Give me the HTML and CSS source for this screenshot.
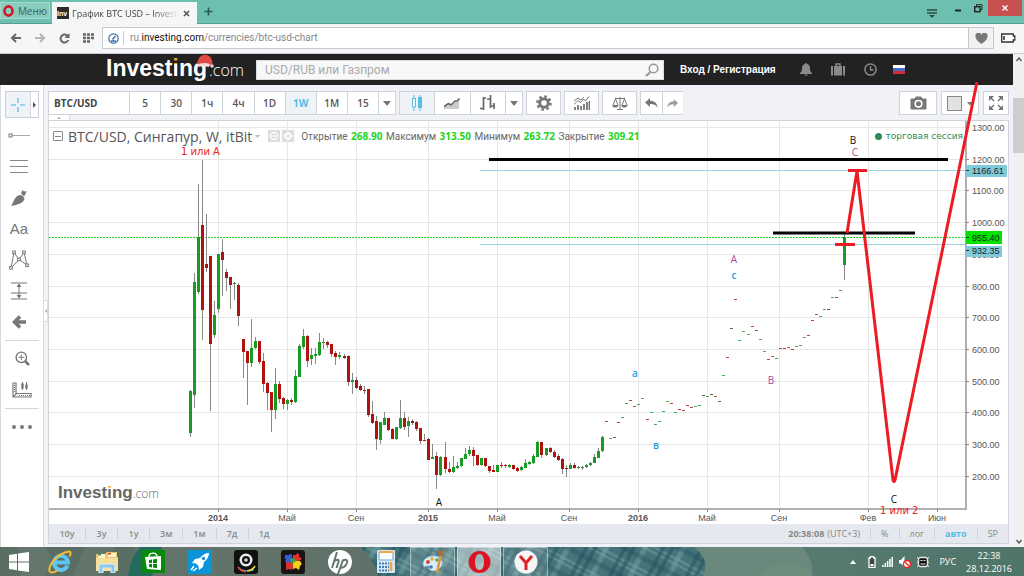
FILE: index.html
```html
<!DOCTYPE html>
<html lang="ru">

<head>
    <meta charset="UTF-8">
    <meta name="viewport" content="width=device-width, initial-scale=1.0">
    <title>График BTC USD – Investing.com</title>
    <link rel="stylesheet" href="styles.css">
</head>

<body>

    <!-- Browser tabs -->
    <div class="tabbar">
        <button class="opera-menu">
            <svg width="11" height="12" viewBox="0 0 11 12"><ellipse cx="5.5" cy="6" rx="4" ry="4.6" fill="none" stroke="#d8131f" stroke-width="2.6"/></svg>
            Меню
        </button>
        <div class="tab">
            <svg width="12" height="12" viewBox="0 0 12 12"><rect width="12" height="12" fill="#2b2b2b"/><text x="0" y="9" font-family="Liberation Sans" font-weight="bold" font-size="7" fill="#fff">Inv</text></svg>
            <span class="tab-title">График BTC USD – Investi</span>
            <button class="tab-close" aria-label="Закрыть"><svg width="7" height="7" viewBox="0 0 7 7"><path d="M1 1l5 5M6 1L1 6" stroke="#555" stroke-width="1.6"/></svg></button>
        </div>
        <button class="tab-new" aria-label="Новая вкладка"><svg width="9" height="9" viewBox="0 0 9 9"><path d="M4.500 0.500v8M0.500 4.500h8" stroke="#2d5a52" stroke-width="1.6"/></svg></button>
        <div class="window-buttons">
            <button class="win-list" aria-label="Вкладки"><svg width="10" height="9" viewBox="0 0 10 9"><path d="M0 1h10M0 4h10" stroke="#2d4f49" stroke-width="1.300"/><path d="M2 6h6L5 9z" fill="#2d4f49"/></svg></button>
            <button class="win-min" aria-label="Свернуть"><svg width="7" height="3" viewBox="0 0 7 3"><path d="M0 1.500h6" stroke="#222" stroke-width="2"/></svg></button>
            <button class="win-max" aria-label="Развернуть"><svg width="9" height="9" viewBox="0 0 9 9"><path d="M2.500 2V.7H8v5H6.500" fill="none" stroke="#222"/><rect x=".7" y="2.700" width="5.300" height="5" fill="none" stroke="#222" stroke-width="1.400"/></svg></button>
            <button class="win-close" aria-label="Закрыть окно"><svg width="6" height="6" viewBox="0 0 6 6"><path d="M.5.5l5 5M5.500.5l-5 5" stroke="#fff" stroke-width="1.400"/></svg></button>
        </div>
    </div>

    <!-- Address bar -->
    <div class="addressbar">
        <button aria-label="Назад"><svg width="12" height="10" viewBox="0 0 12 10"><path d="M6 1L2 5l4 4M2 5h9" fill="none" stroke="#666" stroke-width="2"/></svg></button>
        <button aria-label="Вперед"><svg width="12" height="10" viewBox="0 0 12 10"><path d="M6 1l4 4-4 4M10 5H1" fill="none" stroke="#b5b5b5" stroke-width="2"/></svg></button>
        <button aria-label="Обновить"><svg width="11" height="11" viewBox="0 0 11 11"><path d="M9 3.500A4 4 0 1 0 9.300 7" fill="none" stroke="#666" stroke-width="2"/><path d="M10.500 0v5H5.500z" fill="#666"/></svg></button>
        <button aria-label="Экспресс-панель"><svg width="11" height="10" viewBox="0 0 11 10"><path d="M0 1.500h11M0 5h11M0 8.500h7" stroke="#666" stroke-width="2.600" stroke-dasharray="3 1"/></svg></button>
        <div class="url-box">
            <svg width="11" height="11" viewBox="0 0 11 11"><circle cx="5.500" cy="5.500" r="4.700" fill="none" stroke="#3a6ea5" stroke-width="1.200"/><path d="M3 8h5M4.500 6.500l3-3.500" stroke="#3a6ea5" stroke-width="1.400"/></svg>
            <a class="url" href="#">ru.<b>investing.com</b>/currencies/btc-usd-chart</a>
            <button class="heart" aria-label="В закладки"><svg width="13" height="11" viewBox="0 0 13 11"><path d="M6.500 11C2 7.500.5 5.700.5 3.500A3 3 0 0 1 6.500 2a3 3 0 0 1 6 1.500C12.500 5.700 11 7.500 6.500 11z" fill="#777"/></svg></button>
        </div>
        <svg class="battery" width="15" height="10" viewBox="0 0 15 10"><path d="M.7 1h11.600v2h1.500v4h-1.500v2H.7z" fill="#fff" stroke="#333" stroke-width="1.300"/><path d="M3 3v4" stroke="#222" stroke-width="1.500"/></svg>
    </div>

    <div class="viewport">
        <div class="page">
            <header class="site-header">
                <a class="logo" href="#">
                    <span class="logo-name">Invest<span class="logo-i">i</span>ng</span><span class="logo-com">.com</span>
                    <svg class="hat" width="18" height="14" viewBox="0 0 18 14"><path d="M1 10C2 2 8-1 13 2c3 2 4 6 3 10z" fill="#e14a45"/><path d="M0 11c4-2 9-3 14-1l-1 3c-4-1-8-1-12 0z" fill="#f6dada"/><circle cx="16" cy="12" r="1.800" fill="#f4c9c9"/></svg>
                </a>
                <form class="search">
                    <input type="text" placeholder="USD/RUB или Газпром" aria-label="Поиск">
                    <button type="button" aria-label="Найти"><svg width="14" height="14" viewBox="0 0 14 14"><circle cx="8.500" cy="5.500" r="4.300" fill="none" stroke="#999" stroke-width="1.600"/><path d="M5.500 9L1 13" stroke="#999" stroke-width="2.200"/></svg></button>
                </form>
                <a class="login" href="#">Вход / Регистрация</a>
                <button aria-label="Уведомления"><svg width="12" height="13" viewBox="0 0 12 13"><path d="M6 0a1 1 0 0 1 1 1c2 .6 3 2 3 4.500 0 2.500.6 3.500 2 4.500v1H0v-1c1.400-1 2-2 2-4.500C2 3 3 1.600 5 1a1 1 0 0 1 1-1zM4.500 11.500h3a1.500 1.200 0 0 1-3 0z" fill="#8a8a8a"/></svg></button>
                <button aria-label="Портфель"><svg width="14" height="13" viewBox="0 0 14 13"><path d="M5 3V1h4v2" fill="none" stroke="#8a8a8a" stroke-width="1.400"/><path d="M0 3h2v9.500H0zM3 3h8v9.500H3zM12 3h2v9.500h-2z" fill="#8a8a8a"/></svg></button>
                <button aria-label="История"><svg width="13" height="13" viewBox="0 0 13 13"><circle cx="6.500" cy="6.500" r="5.600" fill="none" stroke="#8a8a8a" stroke-width="1.500"/><path d="M6.500 3v4h3" fill="none" stroke="#8a8a8a" stroke-width="1.300"/></svg></button>
                <button aria-label="Русский"><svg width="12" height="9" viewBox="0 0 12 9"><path d="M0 0h12v3H0z" fill="#fff"/><path d="M0 3h12v3H0z" fill="#3f6fc4"/><path d="M0 6h12v3H0z" fill="#d92b35"/></svg></button>
            </header>

            <div class="workspace">
                <!-- Drawing tools -->
                <div class="tools">
                    <div class="tool-split">
                        <button class="cross" aria-label="Перекрестие"><svg width="14" height="14" viewBox="0 0 14 14"><path d="M7 0v5M7 9v5M0 7h5M9 7h5" stroke="#7cc9e8" stroke-width="1.600"/></svg></button>
                        <button class="more" aria-label="Еще"><svg width="3" height="6" viewBox="0 0 3 6"><path d="M0 0l3 3-3 3z" fill="#555"/></svg></button>
                    </div>
                    <button aria-label="Линия"><svg width="22" height="5" viewBox="0 0 22 5"><path d="M3 2.500h19" stroke="#aaa"/><rect x="1" y="1" width="3" height="3" fill="#fff" stroke="#777"/></svg></button>
                    <button aria-label="Каналы"><svg width="18" height="14" viewBox="0 0 18 14"><path d="M0 .5h18M0 6.500h18M0 12.500h18" stroke="#888"/></svg></button>
                    <button aria-label="Кисть"><svg width="18" height="18" viewBox="0 0 18 18"><path d="M1 17C4 13 4 9 8 6.500c2-1 3-.5 4 0l2.500 2.500c0 5-7 7-13.500 8z" fill="#777"/><path d="M11 4.500L12.500 1l1.500 1.500 2.500-.5-1 3-1.500 2.500z" fill="#777"/></svg></button>
                    <button class="tool-text">Aa</button>
                    <button aria-label="Фигуры"><svg width="20" height="20" viewBox="0 0 20 20"><path d="M2 18L5 2.500l5 7 5-7L18 15l-8-5.500z" fill="none" stroke="#777"/><g fill="#fff" stroke="#777"><rect x=".7" y="16.500" width="2.600" height="2.600"/><rect x="3.700" y="1" width="2.600" height="2.600"/><rect x="13.700" y="1" width="2.600" height="2.600"/><rect x="16.700" y="14" width="2.600" height="2.600"/><rect x="8.700" y="8.200" width="2.600" height="2.600"/></g></svg></button>
                    <button aria-label="Измерение"><svg width="16" height="18" viewBox="0 0 16 18"><path d="M0 1h16M0 11h16M0 17h16M8 2v14" stroke="#777"/><path d="M5.500 5L8 1.500 10.500 5zM5.500 13L8 16.500 10.500 13z" fill="#777"/></svg></button>
                    <button aria-label="Стрелка"><svg width="15" height="14" viewBox="0 0 15 14"><path d="M8 1.500L2.500 7 8 12.500M3 7h11" fill="none" stroke="#777" stroke-width="3.600"/></svg></button>
                    <hr>
                    <button class="wide" aria-label="Увеличить"><svg width="15" height="15" viewBox="0 0 15 15"><circle cx="6.300" cy="6.300" r="5.200" fill="none" stroke="#777" stroke-width="1.400"/><path d="M3.500 6.300h5.600M6.300 3.500v5.600" stroke="#777"/><path d="M10 10l4 4" stroke="#777" stroke-width="2.600"/></svg></button>
                    <button class="wide" aria-label="Линейка"><svg width="20" height="16" viewBox="0 0 20 16"><path d="M1 1h3v10.500h15v3.500H1zM1 15l4-4" fill="none" stroke="#777" stroke-width="1.200"/><path d="M7 13.500h11M2.500 3v8" stroke="#777" stroke-dasharray="1 1"/><path d="M10.500 0v8M14.500 0v8" stroke="#777"/><path d="M10.500 1.500v5M14.500 2.500v4" stroke="#777" stroke-width="2.400"/></svg></button>
                    <hr>
                    <button class="wide" aria-label="Другое"><svg width="20" height="4" viewBox="0 0 20 4"><g fill="#777"><circle cx="2" cy="2" r="2"/><circle cx="10" cy="2" r="2"/><circle cx="18" cy="2" r="2"/></g></svg></button>
                    <button class="handle" aria-label="Скрыть панель"><svg width="2" height="4" viewBox="0 0 2 4"><path d="M2 0v4L0 2z" fill="#aaa"/></svg></button>
                </div>

                <div class="terminal">
                    <!-- Chart toolbar -->
                    <div class="toolbar">
                        <div class="group intervals">
                            <input class="symbol" type="text" value="BTC/USD" aria-label="Символ">
                            <button>5</button>
                            <button>30</button>
                            <button>1ч</button>
                            <button>4ч</button>
                            <button>1D</button>
                            <button class="active">1W</button>
                            <button>1M</button>
                            <button>15</button>
                            <button class="drop" aria-label="Интервалы"><svg width="8" height="5" viewBox="0 0 8 5"><path d="M0 0h8L4 5z" fill="#777"/></svg></button>
                        </div>
                        <div class="group styles">
                            <button class="active" aria-label="Свечи"><svg width="12" height="16" viewBox="0 0 12 16"><path d="M3 0v3M3 12v4M9 0v16" stroke="#56bde6"/><rect x="1.500" y="3.500" width="3" height="8.500" fill="#fff" stroke="#56bde6"/><rect x="7" y="2" width="4" height="11" fill="#56bde6"/></svg></button>
                            <button aria-label="Область"><svg width="16" height="11" viewBox="0 0 16 11"><path d="M0 9l4-3 3 2 4-4 4-2v9H0z" fill="#ccc"/><path d="M0 8.500l4.500-3L7 7l4-4h2l2.500-2.500" fill="none" stroke="#666" stroke-width="1.600"/></svg></button>
                            <button aria-label="Бары"><svg width="16" height="16" viewBox="0 0 16 16"><path d="M3.500 2v13M0 13.500h4M3 3h3M10.500 0v13M7 4h3M10 11h5M14 8v6" fill="none" stroke="#666" stroke-width="1.700"/></svg></button>
                            <button class="drop" aria-label="Типы графика"><svg width="8" height="5" viewBox="0 0 8 5"><path d="M0 0h8L4 5z" fill="#777"/></svg></button>
                        </div>
                        <div class="group single"><button aria-label="Настройки"><svg width="16" height="16" viewBox="0 0 16 16"><circle cx="8" cy="8" r="4.300" fill="none" stroke="#777" stroke-width="3"/><circle cx="8" cy="8" r="6.600" fill="none" stroke="#777" stroke-width="2.400" stroke-dasharray="2.600 2.584"/></svg></button></div>
                        <div class="group single"><button aria-label="Индикаторы"><svg width="16" height="14" viewBox="0 0 16 14"><path d="M1 14v-3M4 14V9M7 14v-4M10 14V8M13 14V6M15.500 14V5" stroke="#777" stroke-width="1.800"/><path d="M0 8.500l4-4 2.500 2 3-3.500 2 2L15 .5M0 5l4-3 3 2 3-3" fill="none" stroke="#777"/></svg></button></div>
                        <div class="group single"><button aria-label="Сравнить"><svg width="16" height="13" viewBox="0 0 16 13"><path d="M8 0v12M5 12.500h6M3 1.500h10M3.500 2L.8 8.500h5.400zM12.500 2L9.800 8.500h5.400z" fill="none" stroke="#777"/><path d="M.5 8.500h5.500a2.700 2 0 0 1-5.500 0zM9.500 8.500H15a2.700 2 0 0 1-5.500 0z" fill="#777"/></svg></button></div>
                        <div class="group undo">
                            <button aria-label="Отменить"><svg width="13" height="10" viewBox="0 0 13 10"><path d="M5 0v2.700c4.500 0 7 2 7.500 7C11 7 9 6 5 6v3L0 4.500z" fill="#777"/></svg></button>
                            <button aria-label="Повторить"><svg width="11" height="9" viewBox="0 0 13 10"><path d="M8 0v2.700C3.500 2.700 1 4.700.5 9.700 2 7 4 6 8 6v3l5-4.500z" fill="#999"/></svg></button>
                        </div>
                        <div class="right-tools">
                            <div class="group layout"><button aria-label="Снимок"><svg width="17" height="14" viewBox="0 0 17 14"><path d="M1.500 2.500h3L6 .5h5l1.500 2h3a1 1 0 0 1 1 1v9a1 1 0 0 1-1 1h-14a1 1 0 0 1-1-1v-9a1 1 0 0 1 1-1z" fill="#777"/><circle cx="8.500" cy="7.800" r="3.300" fill="#777" stroke="#fff" stroke-width="1.600"/></svg></button></div>
                            <div class="group layout"><button aria-label="Макет"><svg width="26" height="15" viewBox="0 0 26 15"><rect x=".5" y=".5" width="14" height="14" fill="#e2e2e2" stroke="#888"/><path d="M20 6h6l-3 3.500z" fill="#777"/></svg></button></div>
                            <div class="group full"><button aria-label="Во весь экран"><svg width="16" height="16" viewBox="0 0 16 16"><path d="M1 6V1h5zM10 1h5v5zM1 10v5h5zM15 10v5h-5z" fill="#777"/><path d="M2 2l4 4M14 2l-4 4M2 14l4-4M14 14l-4-4" stroke="#777" stroke-width="1.500"/></svg></button></div>
                        </div>
                    </div>
                    <button class="collapse" aria-label="Свернуть панель"><svg width="4" height="2" viewBox="0 0 4 2"><path d="M0 2h4L2 0z" fill="#aaa"/></svg></button>

                    <div class="chart">
                        <svg class="plot" viewBox="49 121 959 403">
                            <g id="grid"></g>
                            <path class="price-line" d="M49 237.500H966"/>
                            <path class="level" d="M480 170.500H966M480 244.500H966"/>
                            <g id="candles"></g>
                            <path class="axis" d="M49 509H967M966 121V510"/>
                            <g id="axis-labels"></g>
                            <g class="tags">
                                <rect x="966" y="165" width="41" height="12" fill="#7fcbda"/>
                                <rect x="966" y="246" width="36" height="11" fill="#7fcbda"/>
                                <rect x="966" y="231" width="36" height="13" fill="#00e400"/>
                                <path d="M966 170.500h3M966 237.500h3M966 250.500h3" stroke="#333"/>
                                <text x="972" y="174">1166.61</text>
                                <text x="972" y="241">955.40</text>
                                <text x="972" y="254">932.35</text>
                            </g>
                            <path class="thick" d="M489 159.500H948M773 233H915"/>
                            <path class="wave" d="M848 170.500H867M835 244.500H855M847 233L857 171L893 480Q894 483 895 480L977 82"/>
                            <g class="marks">
                                <text class="verdana red" x="181" y="155">1 или A</text>
                                <text class="verdana red" x="880" y="514">1 или 2</text>
                                <text x="439" y="506">A</text>
                                <text x="853" y="144">B</text>
                                <text x="894" y="503">C</text>
                                <text class="purple" x="855" y="156">C</text>
                                <text class="purple" x="734" y="263">A</text>
                                <text class="purple" x="771" y="384">B</text>
                                <text class="blue" x="734" y="279">c</text>
                                <text class="blue" x="635" y="377">a</text>
                                <text class="blue" x="656" y="449">в</text>
                            </g>
                        </svg>
                        <div class="legend">
                            <button class="fold" aria-label="Свернуть"></button>
                            <span class="legend-title">BTC/USD, Сингапур, W, itBit</span>
                            <svg width="5" height="3" viewBox="0 0 5 3"><path d="M0 0h5L2.500 3z" fill="#bbb"/></svg>
                            <span class="legend-icons">
                                <svg width="12" height="12" viewBox="0 0 12 12"><rect width="12" height="12" fill="#ddd"/><circle cx="6" cy="6" r="3.500" fill="none" stroke="#fff" stroke-width="1.400"/><circle cx="6" cy="6" r="1.200" fill="#fff"/></svg>
                                <svg width="12" height="12" viewBox="0 0 12 12"><rect width="12" height="12" fill="#ddd"/><circle cx="6" cy="6" r="2.600" fill="none" stroke="#fff" stroke-width="2"/><path d="M6 1v10M1 6h3M8 6h3" stroke="#fff"/><circle cx="6" cy="6" r="1.500" fill="#ddd"/></svg>
                            </span>
                            <span class="ohlc">Открытие <b>268.90</b> Максимум <b>313.50</b> Минимум <b>263.72</b> Закрытие <b>309.21</b></span>
                            <span class="session">торговая сессия</span>
                        </div>
                        <div class="watermark"><span>Invest<span class="logo-i">i</span>ng</span><small>.com</small></div>
                    </div>

                    <!-- Ranges and scale -->
                    <div class="chart-footer">
                        <div class="ranges">
                            <button>10y</button>
                            <button>3y</button>
                            <button>1y</button>
                            <button>3м</button>
                            <button>1м</button>
                            <button>7д</button>
                            <button>1д</button>
                        </div>
                        <div class="scale">
                            <button><strong>20:38:08</strong> (UTC+3)</button>
                            <button>%</button>
                            <button>лог</button>
                            <button class="on">авто</button>
                            <button>SP</button>
                        </div>
                    </div>
                </div>
            </div>
        </div>
        <div class="scrollbar">
            <svg width="6" height="5" viewBox="0 0 6 5"><path d="M.5 4L3 1l2.500 3" fill="none" stroke="#555" stroke-width="1.400"/></svg>
            <div class="thumb"></div>
            <svg width="6" height="5" viewBox="0 0 6 5"><path d="M.5 1L3 4l2.500-3" fill="none" stroke="#555" stroke-width="1.400"/></svg>
        </div>
    </div>

    <!-- Windows taskbar -->
    <footer class="taskbar">
        <svg class="cloth" viewBox="0 0 1024 29" preserveAspectRatio="none">
            <defs>
                <pattern id="plaid" width="34" height="26" patternUnits="userSpaceOnUse" patternTransform="rotate(28)">
                    <rect width="34" height="26" fill="#44747a"/>
                    <path d="M0 5h34M0 10h34" stroke="#7ba3a8" stroke-width="2.500" opacity=".45"/>
                    <path d="M8 0v26M16 0v26" stroke="#24505c" stroke-width="4" opacity=".5"/>
                    <path d="M26 0v26" stroke="#86aaab" stroke-width="5" opacity=".4"/>
                    <path d="M0 20h34" stroke="#24505c" stroke-width="5" opacity=".4"/>
                </pattern>
            </defs>
            <path d="M0 0h135v29H0z" fill="#4c6156" opacity=".4"/>
            <path d="M15 0q12 12 5 29h25q14-14 0-29zM85 0l-12 29h28l14-29z" fill="#7c8c83" opacity=".3"/>
            <path d="M140 0h22l-10 29h-24q2-18 12-29z" fill="#256b5b"/>
            <path d="M360 0h334q16 8 9 29H378q-6-19-18-29z" fill="url(#plaid)"/>
            <path d="M694 0h108q12 12 10 29H703q8-16-9-29z" fill="#6a897c"/>
            <path d="M760 29q8-12 28-12t24 12z" fill="#78937f" opacity=".4"/>
        </svg>
        <button class="start" aria-label="Пуск"><svg width="20" height="20" viewBox="0 0 20 20"><path d="M0 3l8-1.200V9.500H0zM9 1.600L20 0v9.500H9zM0 10.500h8v7.700L0 17zM9 10.500h11V20L9 18.400z" fill="#fff"/></svg></button>
        <nav class="apps">
            <button aria-label="Internet Explorer"><svg width="24" height="24" viewBox="0 0 24 24"><path d="M19.500 15.500A7 7 0 1 1 20 12.500H6" fill="none" stroke="#5cc5f2" stroke-width="4"/><path d="M2 22C-1 17 9 3 21 1.500c2 0 2 2 .5 5" fill="none" stroke="#f4bf2f" stroke-width="2"/><path d="M2 22c2 1.500 5 0 8-2" fill="none" stroke="#f4bf2f" stroke-width="2"/></svg></button>
            <button aria-label="Проводник"><svg width="24" height="22" viewBox="0 0 24 22"><path d="M1 3h9l2-2h10v5h1v14H1z" fill="#eac66c"/><path d="M3 3h7v4H3zM13 2h8v4h-8z" fill="#fff5cc"/><path d="M3 3h3v1.500H3z" fill="#41a151"/><path d="M13 2h3v1.500h-3z" fill="#d64534"/><path d="M1 7h22v13H1z" fill="#f6df98"/><path d="M4 22v-7q0-2 2-2h12q2 0 2 2v7h-4v-5H8v5z" fill="#8cc7ea" stroke="#d9f0fb"/></svg></button>
            <button aria-label="Магазин"><svg width="23" height="23" viewBox="0 0 23 23"><rect width="23" height="23" fill="#078a09"/><path d="M3 7l16-1v14L5 19z" fill="#fff"/><path d="M7 7c0-5 7-5 8-1" fill="none" stroke="#fff" stroke-width="1.400"/><path d="M7 10l3-.5V13H7zM11 9.400l4-.6V13h-4zM7 14h3v3.500L7 17zM11 14h4v4.200l-4-.6z" fill="#078a09"/></svg></button>
            <button aria-label="Ракета"><svg width="24" height="24" viewBox="0 0 24 24"><rect width="24" height="24" fill="#0b95d8"/><path d="M21 3q-5 0-9 5L7 9l-3 4 4 .5 2.500 2.500.5 4 4-3 1-5q5-4 5-9z" fill="#fff"/><circle cx="15.500" cy="8.500" r="1.700" fill="#0b95d8"/><path d="M6 16l-3 4M9 18l-4 3" stroke="#fff" stroke-width="1.500"/></svg></button>
            <button aria-label="Камера"><svg width="24" height="24" viewBox="0 0 24 24"><rect width="24" height="24" rx="3" fill="#111"/><path d="M4 17q8 7 17-1l-2 5H7z" fill="#4bb4e8"/><path d="M4 17q4 5 8 4.500" stroke="#e34639" stroke-width="2" fill="none"/><path d="M13 21q5 0 8-5" stroke="#f3d234" stroke-width="1.600" fill="none"/><circle cx="12" cy="10" r="6.500" fill="#eee"/><circle cx="12" cy="10" r="4" fill="#111"/><circle cx="12" cy="10" r="1.800" fill="#d7d7d7"/></svg></button>
            <button aria-label="Пазл"><svg width="24" height="24" viewBox="0 0 24 24"><rect width="24" height="24" rx="3" fill="#181414"/><path d="M4 5h4q2-2 3 0v4q2 1 0 3H4l1-3q-3-1-1-2z" fill="#315fd8"/><path d="M12 5h3q1-3 3-1v3q3 0 2 3l-6 2q-3-2-2-7z" fill="#e42d2e"/><path d="M5 12h6l2 4-2 4-3-1-3 1z" fill="#d8342d"/><path d="M12 11h7q3 3 0 5l-1 4-3-2-3 1z" fill="#f4cf1b"/><path d="M9 9l4-1 2 3-4 3z" fill="#35a744"/></svg></button>
            <button aria-label="HP"><svg width="26" height="26" viewBox="0 0 26 26"><circle cx="13" cy="13" r="12" fill="#fff"/><path d="M10 3L5 19M7.500 12q5-3 4 1l-2 6M16 11l-5 14M15 12q6-3 5 1.500-2 6-7 5" fill="none" stroke="#64756b" stroke-width="2"/></svg></button>
            <button aria-label="Калькулятор"><svg width="18" height="23" viewBox="0 0 18 23"><rect width="18" height="23" rx="1" fill="#d5e8f5"/><path d="M2 2h14v8H2z" fill="#f7fbfd" stroke="#7ba8cc"/><path d="M2 2h14" stroke="#eca94b" stroke-width="2"/><path d="M2 13.500h10M2 17h10M2 20.500h10" stroke="#477fb2" stroke-width="2" stroke-dasharray="2 1"/><path d="M14 12v9" stroke="#eca94b" stroke-width="2.500"/></svg></button>
            <button class="open" aria-label="Paint"><svg width="24" height="24" viewBox="0 0 24 24"><path d="M2 15C1 8 9 5 15 6s8 7 5 11-8 5-11 3 1-4-2-4-4 2-5-1z" fill="#d9edf7" stroke="#7fb0cd"/><circle cx="7" cy="12" r="2" fill="#d64839"/><circle cx="11" cy="9" r="1.800" fill="#e8ab30"/><circle cx="16" cy="10" r="1.800" fill="#54a943"/><circle cx="10" cy="17" r="1.800" fill="#3975c6"/><path d="M20 4l-4 19" stroke="#df9640" stroke-width="2.500"/><path d="M17 1l6-1-1 6h-4z" fill="#a96e35"/></svg></button>
            <button class="open current" aria-label="Opera"><svg width="23" height="24" viewBox="0 0 23 24"><path fill-rule="evenodd" d="M11.500 1a11 11 0 1 1 0 22 11 11 0 0 1 0-22zm0 3C8.500 4 7 7.500 7 12s1.500 8 4.500 8 4.500-3.500 4.500-8-1.500-8-4.500-8z" fill="#dc1422"/></svg></button>
            <button class="open" aria-label="Яндекс"><svg width="24" height="24" viewBox="0 0 24 24"><circle cx="12" cy="12" r="11.500" fill="#f6f6f6"/><path d="M6 6l6 7 6-7M12 12v8" fill="none" stroke="#df2126" stroke-width="3"/></svg></button>
        </nav>
        <div class="tray">
            <svg width="6" height="4" viewBox="0 0 6 4"><path d="M0 4h6L3 0z" fill="#fff"/></svg>
            <svg class="tray-battery" width="8" height="12" viewBox="0 0 8 12"><path d="M1 2h1.500V.7h3V2H7v9.300H1z" fill="#33483f" stroke="#fff" stroke-width="1.300"/><path d="M2.500 8h3v2h-3z" fill="#fff"/></svg>
            <svg width="11" height="10" viewBox="0 0 11 10"><path d="M1 10V8M3.300 10V6M5.600 10V4M7.900 10V2M10.200 10V0" stroke="#fff" stroke-width="1.500"/></svg>
            <svg width="12" height="12" viewBox="0 0 12 12"><path d="M0 4h2l3.500-4v11L2 7.500H0z" fill="#fff"/><circle cx="8" cy="8" r="3.500" fill="#fff" stroke="#e0251f" stroke-width="1.300"/><path d="M5.700 5.700l4.600 4.600" stroke="#e0251f" stroke-width="1.300"/></svg>
            <svg width="12" height="12" viewBox="0 0 12 12"><rect x="1.500" y="1.500" width="9" height="9" rx="2" fill="#111" stroke="#e8e8e8" stroke-width="1.400"/><path d="M0 1l2 2M0 6h2M0 11l2-2M12 1l-2 2M10 6h2M12 11l-2-2M3.500 4.500h2M6.500 4.500h2M3.500 8h5" stroke="#e8e8e8"/></svg>
            <span class="lang">РУС</span>
            <div class="clock">22:38<br>28.12.2016</div>
        </div>
    </footer>

    <script>
        const NS = "http://www.w3.org/2000/svg";
        const START = 190;
        const WEEK = 4.04;

        // weekly candles: high, body top, body bottom, low, direction
        const candles = [
            [390, 391, 433, 437, "g"], [273, 282, 395, 408, "g"], [184, 237, 292, 294, "g"], [160, 225, 310, 340, "r"],
            [214, 264, 268, 272, "r"], [256, 256, 344, 411, "r"], [301, 315, 335, 338, "g"], [254, 254, 309, 313, "g"],
            [239, 252, 260, 296, "r"], [269, 272, 278, 291, "r"], [277, 277, 285, 309, "r"], [282, 283, 284, 300, "g"],
            [283, 285, 316, 326, "r"], [339, 339, 352, 378, "r"], [351, 351, 363, 405, "r"], [319, 348, 363, 367, "g"],
            [337, 341, 348, 349, "g"], [341, 341, 362, 364, "r"], [353, 361, 384, 392, "r"], [382, 383, 393, 410, "r"],
            [392, 392, 410, 432, "r"], [368, 384, 410, 419, "g"], [381, 384, 399, 403, "r"], [397, 398, 404, 409, "r"],
            [399, 400, 404, 410, "g"], [398, 400, 402, 405, "r"], [370, 376, 402, 403, "g"], [344, 346, 377, 377, "g"],
            [329, 336, 347, 349, "g"], [335, 336, 361, 367, "r"], [348, 355, 359, 365, "g"], [348, 354, 356, 364, "g"],
            [333, 342, 355, 356, "g"], [338, 342, 343, 349, "g"], [341, 342, 345, 348, "r"], [344, 344, 354, 357, "r"],
            [351, 353, 357, 365, "r"], [352, 355, 357, 359, "g"], [354, 356, 358, 359, "r"], [355, 356, 382, 386, "r"],
            [373, 380, 382, 394, "g"], [377, 380, 388, 389, "r"], [384, 386, 390, 391, "r"], [386, 390, 391, 394, "r"],
            [389, 389, 415, 417, "r"], [401, 414, 423, 424, "r"], [416, 421, 439, 450, "r"], [422, 422, 440, 444, "g"],
            [412, 418, 425, 425, "g"], [418, 418, 430, 431, "r"], [428, 429, 439, 439, "r"], [427, 427, 439, 440, "g"],
            [400, 418, 428, 429, "g"], [412, 418, 427, 430, "r"], [417, 421, 426, 437, "g"], [419, 421, 423, 425, "r"],
            [421, 422, 429, 431, "r"], [428, 428, 441, 444, "r"], [434, 440, 441, 441, "r"], [438, 439, 460, 460, "r"],
            [444, 457, 459, 459, "g"], [452, 456, 475, 489, "r"], [456, 457, 475, 476, "g"], [442, 457, 469, 473, "r"],
            [462, 469, 472, 473, "r"], [456, 467, 472, 473, "g"], [462, 466, 468, 469, "g"], [458, 458, 466, 467, "g"],
            [448, 454, 459, 459, "g"], [446, 450, 454, 456, "g"], [447, 450, 456, 466, "r"], [455, 455, 465, 466, "r"],
            [458, 458, 465, 466, "g"], [458, 458, 466, 467, "r"], [466, 466, 471, 473, "r"], [465, 470, 472, 472, "r"],
            [465, 465, 472, 472, "g"], [462, 465, 466, 468, "r"], [464, 465, 466, 468, "r"], [464, 465, 467, 468, "g"],
            [465, 465, 469, 470, "r"], [467, 468, 471, 472, "r"], [466, 467, 470, 471, "g"], [459, 463, 468, 468, "g"],
            [461, 462, 464, 465, "g"], [454, 456, 463, 464, "g"], [441, 442, 457, 457, "g"], [442, 442, 455, 458, "r"],
            [448, 448, 455, 456, "g"], [447, 448, 452, 453, "r"], [450, 452, 457, 458, "r"], [454, 456, 460, 461, "r"],
            [458, 459, 469, 474, "r"], [465, 468, 469, 477, "r"], [463, 465, 469, 469, "g"], [463, 465, 468, 469, "r"],
            [466, 467, 468, 469, "g"], [466, 467, 468, 470, "g"], [464, 465, 467, 468, "g"], [462, 463, 465, 466, "g"],
            [454, 457, 463, 463, "g"], [448, 451, 458, 458, "g"], [436, 437, 451, 452, "g"]
        ];

        // weeks with almost no range: level and direction
        const flats = ("422r 439g 438d 423r 418g 404g 401r 407r 405g 399g 420r 413g 425g 422g 412g 402g 404r 413g " +
            "410r 411r 406r 408r 407g 406g 396d 397g 395d 397r 402d 376g 358r 329d 300r 341g 332g 335g 327r 331r " +
            "340g 352g 360r 357r 359g 349r 349r 348r 350r 347g 346g 338g 336r 321r 315r 317g 310g 310d 298g 298r 291g").split(" ");

        const months = [
            [218, "2014"], [287, "Май"], [356, "Сен"], [428, "2015"], [497, "Май"], [569, "Сен"],
            [638, "2016"], [707, "Май"], [779, "Сен"], [868, "Фев"], [937, "Июн"]
        ];

        function add(parent, tag, attrs, text) {
            const el = document.createElementNS(NS, tag);
            for (const key in attrs) {
                el.setAttribute(key, attrs[key]);
            }
            if (text) {
                el.textContent = text;
            }
            document.getElementById(parent).appendChild(el);
        }

        function drawCandle(index, [high, top, bottom, low, dir]) {
            const x = Math.round(START + index * WEEK);
            add("candles", "rect", { x: x, y: high, width: 1, height: low - high, class: "wick" });
            add("candles", "rect", { x: x - 1, y: top, width: 3, height: Math.max(bottom - top, 1), class: dir });
        }

        months.forEach(([x, name]) => {
            add("grid", "path", { d: `M${x}.500 121V509` });
            add("axis-labels", "path", { d: `M${x}.500 509v3` });
            add("axis-labels", "text", { x: x, y: 521, class: /\d/.test(name) ? "month year" : "month" }, name);
        });

        for (let price = 1300; price >= 200; price -= 100) {
            const y = Math.round(128 + (1300 - price) * 0.317);
            add("grid", "path", { d: `M49 ${y - 0.5}H966` });
            add("axis-labels", "path", { d: `M966 ${y - 0.5}h3` });
            add("axis-labels", "text", { x: 972, y: y + 3 }, price.toFixed(2));
        }

        candles.forEach((candle, i) => drawCandle(i, candle));
        flats.forEach((item, i) => {
            const x = Math.round(START + (candles.length + i) * WEEK);
            add("candles", "rect", { x: x - 1, y: parseInt(item) - 1, width: 3, height: 1, class: "flat " + item.slice(-1) });
        });
        drawCandle(candles.length + flats.length, [234, 237, 265, 280, "g"]);
    </script>

</body>

</html>
```
FILE: styles.css
```css
* {
    margin: 0;
    padding: 0;
    box-sizing: border-box;
}

body {
    display: flex;
    flex-direction: column;
    min-height: 100vh;
    font-family: "Open Sans", sans-serif;
    font-size: 10px;
    color: #555;
    background: #f0f2f7;
    overflow-x: hidden;
}

button {
    display: flex;
    align-items: center;
    justify-content: center;
    border: none;
    background: none;
    font: inherit;
    color: inherit;
    cursor: pointer;
}

a {
    color: inherit;
    text-decoration: none;
}

svg {
    flex: none;
    display: block;
}

/* browser chrome */
.tabbar {
    display: flex;
    height: 24px;
    background: #6dbfb0;
    border-bottom: 1px solid #559f92;
}

.opera-menu {
    gap: 4px;
    width: 50px;
    height: 17px;
    margin: 2px 2px 0 0;
    background: #8accc0;
    border: 1px solid #a5d8cf;
    color: #3d5e59;
}

.tab {
    display: flex;
    align-items: center;
    gap: 3px;
    width: 145px;
    height: 22px;
    margin-top: 2px;
    padding: 0 6px 0 5px;
    background: #f5f6f8;
}

.tab-title {
    flex: 1;
    white-space: nowrap;
    font-size: 9px;
    color: #444;
    -webkit-mask-image: linear-gradient(90deg, #000 75%, transparent);
    mask-image: linear-gradient(90deg, #000 75%, transparent);
}

.tab-close {
    width: 11px;
    height: 12px;
}

.tab-new {
    width: 23px;
}

.window-buttons {
    display: flex;
    align-items: flex-start;
    margin-left: auto;
    padding-right: 2px;
}

.window-buttons button {
    height: 20px;
}

.window-buttons .win-list {
    width: 26px;
    height: 26px;
    margin-right: 3px;
}

.win-min,
.win-max {
    width: 20px;
}

.window-buttons .win-max {
    height: 17px;
}

.window-buttons .win-close {
    width: 34px;
    height: 16px;
    background: #c75050;
}

.addressbar {
    display: flex;
    align-items: center;
    height: 30px;
    padding: 0 8px 1px 4px;
    background: #f5f6f8;
    border-bottom: 1px solid #c9ccd0;
}

.addressbar > button {
    width: 24px;
    height: 24px;
}

.url-box {
    display: flex;
    flex: 1;
    align-items: center;
    height: 22px;
    margin: 0 7px 0 2px;
    padding-left: 5px;
    background: #fff;
    border: 1px solid #c6c8cb;
}

.url {
    flex: 1;
    margin-left: 4px;
    padding-left: 6px;
    border-left: 1px solid #ccc;
    font: 10px/14px Roboto, sans-serif;
    color: #888;
}

.url b {
    font-weight: normal;
    color: #111;
}

.heart {
    width: 25px;
    height: 20px;
    background: #f1f2f3;
    border-left: 1px solid #c6c8cb;
}

/* page */
.viewport {
    display: flex;
    flex: 1;
}

.page {
    display: flex;
    flex: 1;
    flex-direction: column;
}

.scrollbar {
    display: flex;
    flex-direction: column;
    align-items: center;
    justify-content: space-between;
    width: 11px;
    padding: 3px 0;
    background: #f0f0f0;
}

.thumb {
    width: 11px;
    height: 55px;
    margin: 36px 0 auto;
    background: #cdcdcd;
}

.site-header {
    display: flex;
    align-items: center;
    height: 31px;
    padding: 0 107px 0 106px;
    background: #222;
}

.logo {
    position: relative;
    width: 150px;
    white-space: nowrap;
    line-height: 28px;
    color: #fff;
}

.logo-name {
    font: bold 23px/28px "Liberation Sans", Arial, sans-serif;
}

.logo-com {
    margin-left: 2px;
    font-size: 16px;
    font-weight: 300;
}

.logo-i {
    background: linear-gradient(#f5a81c 34%, currentColor 34%);
    -webkit-background-clip: text;
    background-clip: text;
    -webkit-text-fill-color: transparent;
}

.hat {
    position: absolute;
    left: 90px;
    top: 0;
}

.search {
    display: flex;
    flex: 1;
    align-items: center;
    height: 20px;
    padding: 0 4px 0 8px;
    background: #f8f8f8;
    border: 1px solid #ddd;
}

.search input {
    flex: 1;
    min-width: 0;
    border: none;
    outline: none;
    background: none;
    font: 12px Roboto, Arial, sans-serif;
}

.search input::placeholder {
    color: #aaa;
}

.login {
    width: 102px;
    margin: 0 8px 0 16px;
    font: bold 10px "Liberation Sans", Arial, sans-serif;
    color: #fff;
    white-space: nowrap;
}

.site-header > button {
    width: 32px;
    height: 24px;
}

.site-header > button:last-child {
    width: 14px;
    margin-left: 6px;
}

.workspace {
    display: flex;
    flex: 1;
}

.tools {
    position: relative;
    width: 44px;
    padding: 6px 4px 0;
    background: #fff;
    border: solid #d8dbe2;
    border-width: 0 1px;
}

.tools button {
    width: 28px;
    height: 31px;
}

.tools .wide {
    width: 34px;
}

.tools .tool-split {
    display: flex;
    height: 27px;
    margin-bottom: 2px;
    border: 1px solid #ccd0d6;
}

.tools .cross {
    width: 26px;
    height: 25px;
    background: #eff3f8;
    border-right: 1px dotted #bbb;
}

.tools .more {
    width: 7px;
    height: 25px;
}

.tools .tool-text {
    font: 15px "Liberation Sans", Arial, sans-serif;
    color: #777;
}

.tools hr {
    margin: 3px 0 2px;
    border: none;
    border-top: 1px solid #d5d5d5;
}

.tools .handle {
    position: absolute;
    right: -5px;
    top: 215px;
    width: 5px;
    height: 22px;
    background: #fff;
    border: 1px solid #d8dbe2;
}

.terminal {
    flex: 1;
    min-width: 0;
    padding: 6px 4px 3px;
}

.toolbar {
    display: flex;
    gap: 3px;
    height: 24px;
}

.group {
    display: flex;
    background: #fff;
    border: 1px solid #cfd3da;
}

.group button {
    flex: 1;
    font-weight: 600;
}

.group > * + * {
    border-left: 1px solid #cfd3da;
}

.group .active {
    background: #eff3f8;
    color: #56bde6;
    font-weight: bold;
}

.group .drop {
    flex: none;
    width: 17px;
}

.intervals {
    width: 348px;
}

.symbol {
    width: 80px;
    padding-left: 5px;
    border: none;
    outline: none;
    background: none;
    font: bold 10px "Open Sans", sans-serif;
    color: #444;
}

.styles {
    width: 124px;
}

.single {
    width: 35px;
}

.undo {
    width: 43px;
    border-right: none;
}

.right-tools {
    display: flex;
    gap: 4px;
    margin-left: auto;
}

.layout {
    width: 38px;
}

.full {
    width: 26px;
}

.collapse {
    width: 22px;
    height: 5px;
    background: #fff;
    border: 1px solid #d8dbe2;
    border-width: 0 1px;
}

.chart {
    display: grid;
    grid-template: auto / 100%;
    background: #fff;
    border: 1px solid #cfd3da;
    border-bottom: none;
}

.chart > * {
    grid-area: 1 / 1;
}

.plot {
    z-index: 1;
    width: 100%;
    height: auto;
    overflow: visible;
    pointer-events: none;
}

.plot text {
    font: 9px "Liberation Sans", Arial, sans-serif;
    fill: #555;
}

.plot .month {
    text-anchor: middle;
}

.plot .year {
    font-weight: bold;
}

#grid path {
    stroke: #e6e6e6;
}

#axis-labels path {
    stroke: #888;
}

.axis {
    fill: none;
    stroke: #b0b0b0;
    stroke-width: 2;
}

.price-line {
    stroke: #1fd61f;
    stroke-dasharray: 2 1;
}

.level {
    stroke: #9bd8e5;
}

.thick {
    stroke: #000;
    stroke-width: 3;
}

.wave {
    fill: none;
    stroke: #ed1c24;
    stroke-width: 3;
}

.wick {
    fill: #888;
}

.g {
    fill: #169c22;
}

.r {
    fill: #b01212;
}

.d {
    fill: #333;
}

.flat {
    opacity: 0.8;
}

.plot .tags text {
    fill: #222;
}

.plot .marks text {
    font: 10px "Open Sans", sans-serif;
    text-anchor: middle;
    fill: #111;
}

.plot .marks .verdana {
    font: 10px "DejaVu Sans", Verdana, sans-serif;
    text-anchor: start;
}

.plot .marks .red {
    fill: #ed1c24;
}

.plot .marks .purple {
    fill: #a349a4;
}

.plot .marks .blue {
    fill: #1e9fe0;
    font-weight: 600;
}

.legend {
    z-index: 2;
    display: flex;
    align-items: center;
    align-self: start;
    height: 20px;
    margin-top: 5px;
    padding: 0 45px 0 4px;
    white-space: nowrap;
}

.legend .fold {
    width: 10px;
    height: 10px;
    margin-right: 5px;
    border: 1px solid #888;
    border-radius: 1px;
    background: linear-gradient(#888, #888) center / 6px 1px no-repeat;
}

.legend-title {
    margin-right: 3px;
    font-size: 14px;
    color: #555;
}

.legend-icons {
    display: flex;
    gap: 2px;
    margin: 0 7px 0 8px;
}

.ohlc {
    font: 10px Roboto, sans-serif;
    color: #666;
}

.ohlc b {
    margin: 0 1px;
    font-family: "Open Sans", sans-serif;
    color: #22d422;
}

.session {
    display: flex;
    align-items: center;
    gap: 4px;
    margin-left: auto;
    font: 9px "DejaVu Sans", Verdana, sans-serif;
    color: #2e8b57;
}

.session::before {
    content: "";
    width: 7px;
    height: 7px;
    border-radius: 50%;
    background: #2e8b57;
}

.watermark {
    align-self: end;
    margin: 0 0 20px 9px;
    font: bold 17px/22px "Liberation Sans", Arial, sans-serif;
    color: #666;
}

.watermark small {
    font: 300 12px "Open Sans", sans-serif;
}

.chart-footer {
    display: flex;
    justify-content: space-between;
    height: 20px;
    background: #e5e8ee;
    border: 1px solid #cfd3da;
    border-top: none;
    font-size: 9px;
    color: #888;
}

.ranges,
.scale {
    display: flex;
    align-items: center;
}

.chart-footer button {
    min-width: 32px;
    height: 11px;
    padding: 0 10px;
    gap: 3px;
    font-weight: 600;
}

.chart-footer button + button {
    border-left: 1px solid #cdd1d8;
}

.ranges button:first-child {
    width: 36px;
}

.scale button {
    font-weight: normal;
}

.chart-footer .scale button {
    min-width: 28px;
}

.chart-footer .on {
    color: #56bde6;
    font-weight: bold;
}

/* taskbar */
.taskbar {
    position: relative;
    display: flex;
    align-items: center;
    height: 29px;
    background: linear-gradient(90deg, #66776d, #5f7168 35%, #567a70 80%, #4f7468);
    color: #fff;
}

.cloth {
    position: absolute;
    width: 100%;
    height: 29px;
}

.start,
.apps,
.tray {
    position: relative;
}

.start {
    width: 38px;
    height: 29px;
}

.apps {
    display: grid;
    grid-template-columns: repeat(11, 1fr);
    column-gap: 2px;
    width: 510px;
    height: 29px;
}

.open {
    background: rgba(255, 255, 255, 0.15);
    border: 1px solid rgba(255, 255, 255, 0.4);
    border-bottom: none;
}

.current {
    background: rgba(255, 255, 255, 0.5);
}

.tray {
    display: flex;
    align-items: center;
    gap: 6px;
    margin-left: auto;
    padding-right: 12px;
}

.tray-battery {
    margin-left: 6px;
}

.lang {
    margin: 0 4px;
    font-size: 9px;
}

.clock {
    font-size: 9px;
    line-height: 13px;
    text-align: center;
}
```
